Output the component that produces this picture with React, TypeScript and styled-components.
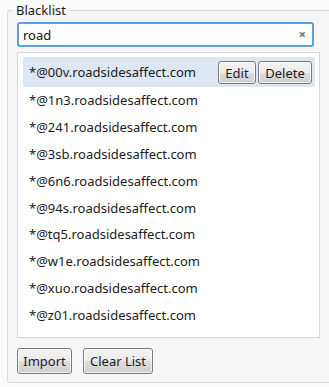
import React from "react";
import styled, { createGlobalStyle } from "styled-components";

const Global = createGlobalStyle`
  html, body { margin: 0; padding: 0; background: #fafafa; overflow: hidden; }
  body { font-family: "Noto Sans", "Open Sans", sans-serif; font-size: 12.5px; color: #1b1b1b; }
  * { box-sizing: border-box; }
`;

const Group = styled.fieldset`
  margin: 2px 0 0 7px;
  width: 322px;
  min-width: 0;
  border: 1px solid #d9dde2;
  border-right: none;
  border-radius: 3px 0 0 3px;
  padding: 3px 0 8px 9px;
  background: #f6f6f6;
`;

const Legend = styled.legend`
  padding: 0 3px;
  margin-left: -4px;
  font-size: 13px;
  line-height: 17px;
  color: #1b1b1b;
`;

const Search = styled.div`
  width: 297px;
  height: 25px;
  border: 2px solid #5aa0dc;
  border-radius: 3px;
  background: #fff;
  display: flex;
  align-items: center;
  padding: 0 4px;
`;

const SearchInput = styled.input`
  flex: 1;
  min-width: 0;
  border: none;
  outline: none;
  background: transparent;
  font: inherit;
  font-size: 13px;
  color: #111;
  padding: 0;
`;

const ClearX = styled.span`
  font-size: 13px;
  font-weight: bold;
  color: #6d6d6d;
  line-height: 1;
  padding-right: 2px;
`;

const List = styled.div`
  margin-top: 5px;
  width: 303px;
  height: 286px;
  border: 1px solid #d6dade;
  background: #fff;
  padding: 4px 4px 4px 5px;
  display: flex;
  flex-direction: column;
`;

const Row = styled.div<{ $selected?: boolean }>`
  height: ${(p) => (p.$selected ? "30px" : "26.8px")};
  flex-shrink: 0;
  display: flex;
  align-items: center;
  padding: 0 3px 0 6px;
  border-radius: 2px;
  background: ${(p) => (p.$selected ? "#dde7f4" : "transparent")};
  font-size: 13px;
  white-space: nowrap;
`;

const RowText = styled.span`
  flex: 1;
`;

const RowActions = styled.div`
  display: flex;
  gap: 2px;
  margin-top: 1px;
`;

const Btn = styled.button<{ $w: number; $h: number }>`
  width: ${(p) => p.$w}px;
  height: ${(p) => p.$h}px;
  padding: 0;
  border: 1px solid #7a7a7a;
  border-radius: 3px;
  background: linear-gradient(#f3f3f3 0%, #ebebeb 50%, #dddddd 51%, #cfcfcf 100%);
  font-family: inherit;
  font-size: 13px;
  color: #1b1b1b;
  box-shadow: inset 0 0 0 1px rgba(255, 255, 255, 0.7);
`;

const Footer = styled.div`
  display: flex;
  gap: 11px;
  margin-top: 10px;
`;

const items = [
  "*@00v.roadsidesaffect.com",
  "*@1n3.roadsidesaffect.com",
  "*@241.roadsidesaffect.com",
  "*@3sb.roadsidesaffect.com",
  "*@6n6.roadsidesaffect.com",
  "*@94s.roadsidesaffect.com",
  "*@tq5.roadsidesaffect.com",
  "*@w1e.roadsidesaffect.com",
  "*@xuo.roadsidesaffect.com",
  "*@z01.roadsidesaffect.com",
];

export default function App() {
  return (
    <>
      <Global />
      <Group>
        <Legend>Blacklist</Legend>
        <Search>
          <SearchInput defaultValue="road" />
          <ClearX>×</ClearX>
        </Search>
        <List>
          {items.map((t, i) => (
            <Row key={t} $selected={i === 0}>
              <RowText>{t}</RowText>
              {i === 0 && (
                <RowActions>
                  <Btn $w={38} $h={23}>Edit</Btn>
                  <Btn $w={54} $h={23}>Delete</Btn>
                </RowActions>
              )}
            </Row>
          ))}
        </List>
        <Footer>
          <Btn $w={55} $h={26}>Import</Btn>
          <Btn $w={70} $h={26}>Clear List</Btn>
        </Footer>
      </Group>
    </>
  );
}
